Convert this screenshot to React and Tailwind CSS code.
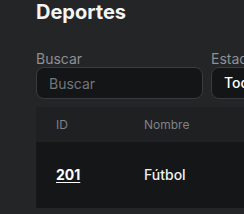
import React from 'react'

const sports = [
    { id: 201, name: 'Fútbol', status: 'Activo' },
]

const App = () => {
    return (
        <div className="w-screen h-screen overflow-hidden bg-[#232527]" style={{ fontFamily: 'Inter, "Noto Sans", sans-serif' }}>
            <div className="pl-9 w-[640px]">
                <h1 className="text-xl leading-6 font-bold text-[#f5f5f5]">Deportes</h1>
                <div className="flex gap-2 mt-[27px]">
                    <div className="w-[167px] flex flex-col">
                        <label className="text-sm leading-4 text-[#8d9094]">Buscar</label>
                        <input
                            placeholder="Buscar"
                            className="h-8 w-full rounded-lg border border-[#393c3f] bg-[#131517] px-3 text-sm text-white placeholder:text-[#74777b] outline-none"
                        />
                    </div>
                    <div className="w-[160px] flex flex-col">
                        <label className="text-sm leading-4 text-[#8d9094]">Estado</label>
                        <div className="h-8 w-full rounded-lg border border-[#393c3f] bg-[#131517] px-3 flex items-center text-sm font-medium text-white">
                            Todos
                        </div>
                    </div>
                </div>
                <table className="mt-2 w-[560px] table-fixed border-collapse text-left">
                    <thead>
                        <tr className="bg-[#1e2022] h-[35px]">
                            <th className="w-[108px] pl-5 text-xs font-normal text-[#7f8286]">ID</th>
                            <th className="w-[180px] text-xs font-normal text-[#7f8286]">Nombre</th>
                            <th className="text-xs font-normal text-[#7f8286]">Estado</th>
                        </tr>
                    </thead>
                    <tbody>
                        {sports.map((sport) => (
                            <tr key={sport.id} className="bg-[#141618] h-[66px]">
                                <td className="pl-5 text-sm font-bold text-white underline underline-offset-2">{sport.id}</td>
                                <td className="text-sm font-medium text-[#f0f0f0]">{sport.name}</td>
                                <td className="text-sm text-[#f0f0f0]">{sport.status}</td>
                            </tr>
                        ))}
                    </tbody>
                </table>
            </div>
        </div>
    )
}

export default App
